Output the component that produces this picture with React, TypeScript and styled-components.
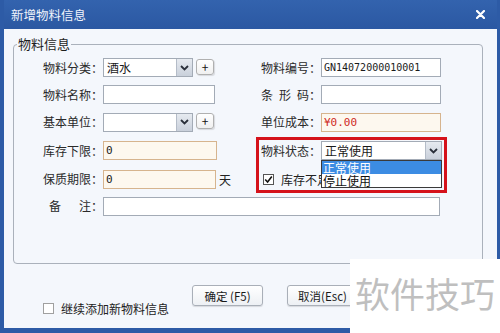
import React from "react";
import styled, { createGlobalStyle } from "styled-components";

const Global = createGlobalStyle`
  html, body { margin: 0; padding: 0; }
  body {
    width: 500px; height: 333px; overflow: hidden;
    font-family: "Noto Sans CJK SC", "Noto Sans", sans-serif;
  }
`;

const Window = styled.div`
  position: relative;
  width: 500px;
  height: 333px;
  box-sizing: border-box;
  background: #2d5ba6;
  padding: 0 3px 5px 4px;
  display: flex;
  flex-direction: column;
`;

const TitleBar = styled.div`
  height: 29px;
  flex-shrink: 0;
  display: flex;
  align-items: center;
  justify-content: space-between;
  padding: 0 12px 0 7px;
  color: #eef3fb;
  font-size: 12.5px;
  background: linear-gradient(#3363ae, #2b58a2);
`;

const Body = styled.div`
  flex: 1;
  background: #f4f7fc;
  padding: 8px 14px 0 9px;
  display: flex;
  flex-direction: column;
`;

const Group = styled.fieldset`
  margin: 0;
  padding: 3px 0 0 0;
  height: 227px;
  box-sizing: border-box;
  border: 1px solid #aab1bb;
  border-radius: 4px;
  min-inline-size: 0;
`;

const Legend = styled.legend`
  margin-left: 3px;
  padding: 0 1px;
  font-size: 13px;
  line-height: 14px;
  color: #1e1e1e;
`;

const FormGrid = styled.div`
  position: relative;
  display: grid;
  grid-template-columns: 89px 114px 44px 60px 122px;
  grid-template-rows: 27px 27px 28px 29px 28px 26px;
  align-items: center;
`;

const Label = styled.div`
  justify-self: end;
  font-size: 12px;
  line-height: 14px;
  color: #2a2a2a;
  white-space: nowrap;
`;

const Cell = styled.div<{ $span?: string }>`
  position: relative;
  display: flex;
  align-items: center;
  gap: 3px;
  grid-column: ${(p) => p.$span || "auto"};
`;

const Field = styled.div<{ $w: number; $peach?: boolean }>`
  flex-shrink: 0;
  width: ${(p) => p.$w}px;
  height: 19px;
  box-sizing: border-box;
  border: 1px solid ${(p) => (p.$peach ? "#d6b48e" : "#a3abb6")};
  background: ${(p) => (p.$peach ? "#fdf8ef" : "#ffffff")};
  display: flex;
  align-items: center;
  padding-left: 2px;
  font-size: 12px;
  color: #1a1a1a;
  overflow: hidden;
  white-space: nowrap;
`;

const Mono = styled.span<{ $red?: boolean; $size?: number }>`
  font-family: "DejaVu Sans Mono", "Liberation Mono", monospace;
  font-size: ${(p) => p.$size || 10}px;
  color: ${(p) => (p.$red ? "#cf2a24" : "#1a1a1a")};
`;

const SelectBox = styled.div<{ $w: number }>`
  position: relative;
  flex-shrink: 0;
  width: ${(p) => p.$w}px;
  height: 19px;
  box-sizing: border-box;
  border: 1px solid #a3abb6;
  background: #fff;
  display: flex;
  align-items: center;
`;

const SelectText = styled.span`
  flex: 1;
  padding-left: 3px;
  font-size: 12px;
  line-height: 14px;
  color: #1a1a1a;
  white-space: nowrap;
`;

const ArrowBtn = styled.div`
  width: 16px;
  height: 17px;
  box-sizing: border-box;
  border-left: 1px solid #b4bcc8;
  background: linear-gradient(#e6eaf0, #c9d0db);
  display: flex;
  align-items: center;
  justify-content: center;
`;

const PlusBtn = styled.div`
  width: 18px;
  height: 16px;
  box-sizing: border-box;
  margin-top: -2px;
  border: 1px solid #b0b0b0;
  border-radius: 3px;
  background: linear-gradient(#ffffff, #f0f0f0);
  box-shadow: 1px 1px 1px rgba(0, 0, 0, 0.12);
  display: flex;
  align-items: center;
  justify-content: center;
  font-size: 12px;
  line-height: 12px;
  color: #111;
`;

const Unit = styled.span`
  font-size: 12px;
  color: #222;
`;

const DropList = styled.div`
  position: absolute;
  top: 18px;
  left: -1px;
  width: 121px;
  box-sizing: border-box;
  border: 1px solid #3a3a3a;
  background: #fff;
  z-index: 3;
`;

const DropItem = styled.div<{ $active?: boolean }>`
  height: 13px;
  line-height: 13px;
  font-size: 12px;
  padding-left: 1px;
  background: ${(p) => (p.$active ? "#3c8ce3" : "#fff")};
  color: ${(p) => (p.$active ? "#ffffff" : "#111")};
  white-space: nowrap;
`;

const CheckRow = styled.div<{ $w?: number; $indent?: number }>`
  display: flex;
  align-items: center;
  gap: 7px;
  flex-shrink: 0;
  margin-left: ${(p) => p.$indent || 0}px;
  width: ${(p) => (p.$w ? `${p.$w}px` : "auto")};
  font-size: 12px;
  line-height: 13px;
  color: #222;
  white-space: nowrap;
`;

const ClippedText = styled.span<{ $max: number }>`
  display: inline-block;
  max-width: ${(p) => p.$max}px;
  overflow: hidden;
  white-space: nowrap;
`;

const Box = styled.div<{ $checked?: boolean }>`
  width: 11px;
  height: 11px;
  box-sizing: border-box;
  border: 1px solid ${(p) => (p.$checked ? "#555" : "#a0a0a0")};
  background: #fff;
  display: flex;
  align-items: center;
  justify-content: center;
  flex-shrink: 0;
`;

const Highlight = styled.div`
  position: absolute;
  left: 242px;
  top: 83px;
  width: 191px;
  height: 56px;
  box-sizing: border-box;
  border: 3px solid #d5121b;
  pointer-events: none;
  z-index: 4;
`;

const Footer = styled.div`
  display: flex;
  align-items: flex-start;
  padding: 21px 0 0 30px;
`;

const FooterCheck = styled(CheckRow)`
  margin-top: 17px;
`;

const Buttons = styled.div`
  display: flex;
  gap: 24px;
`;

const Button = styled.div`
  width: 71px;
  height: 21px;
  box-sizing: border-box;
  border: 1px solid #a9afb8;
  border-radius: 3px;
  background: linear-gradient(#ffffff, #edf0f4);
  box-shadow: 0 1px 1px rgba(0, 0, 0, 0.12);
  display: flex;
  align-items: center;
  justify-content: center;
  font-size: 11.5px;
  color: #1a1a1a;
  white-space: nowrap;
`;

const Watermark = styled.div`
  position: absolute;
  right: 0;
  bottom: 0;
  width: 150px;
  height: 74px;
  background: #ffffff;
  padding: 15px 0 0 5px;
  box-sizing: border-box;
  font-size: 35px;
  line-height: 38px;
  color: #bfbfbf;
  white-space: nowrap;
  overflow: hidden;
`;

const Chevron = () => (
  <svg width="9" height="6" viewBox="0 0 9 6">
    <path d="M1 1 L4.5 4.5 L8 1" fill="none" stroke="#2a2f3a" strokeWidth="1.8" />
  </svg>
);

const Check = () => (
  <svg width="9" height="9" viewBox="0 0 9 9">
    <path d="M1.2 4.5 L3.6 7 L7.8 1.6" fill="none" stroke="#111" strokeWidth="1.6" />
  </svg>
);

const Close = () => (
  <svg width="9" height="9" viewBox="0 0 9 9">
    <path d="M1 1 L8 8 M8 1 L1 8" stroke="#ffffff" strokeWidth="2.2" strokeLinecap="round" />
  </svg>
);

const Select = ({ w, value, children }: { w: number; value?: string; children?: React.ReactNode }) => (
  <SelectBox $w={w}>
    <SelectText>{value}</SelectText>
    <ArrowBtn>
      <Chevron />
    </ArrowBtn>
    {children}
  </SelectBox>
);

export default function App() {
  return (
    <>
      <Global />
      <Window>
        <TitleBar>
          <span>新增物料信息</span>
          <Close />
        </TitleBar>
        <Body>
          <Group>
            <Legend>物料信息</Legend>
            <FormGrid>
              <Label>物料分类：</Label>
              <Cell>
                <Select w={90} value="酒水" />
                <PlusBtn>+</PlusBtn>
              </Cell>
              <div />
              <Label>物料编号：</Label>
              <Cell>
                <Field $w={120}>
                  <Mono>GN14072000010001</Mono>
                </Field>
              </Cell>

              <Label>物料名称：</Label>
              <Cell>
                <Field $w={112} />
              </Cell>
              <div />
              <Label>条{"\u2002"}形{"\u2002"}码：</Label>
              <Cell>
                <Field $w={120} />
              </Cell>

              <Label>基本单位：</Label>
              <Cell>
                <Select w={90} value="" />
                <PlusBtn>+</PlusBtn>
              </Cell>
              <div />
              <Label>单位成本：</Label>
              <Cell>
                <Field $w={120} $peach>
                  <Mono $red $size={11}>¥0.00</Mono>
                </Field>
              </Cell>

              <Label>库存下限：</Label>
              <Cell>
                <Field $w={114} $peach>
                  <Mono $size={11}>0</Mono>
                </Field>
              </Cell>
              <div />
              <Label>物料状态：</Label>
              <Cell>
                <Select w={121} value="正常使用">
                  <DropList>
                    <DropItem $active>正常使用</DropItem>
                    <DropItem>停止使用</DropItem>
                  </DropList>
                </Select>
              </Cell>

              <Label>保质期限：</Label>
              <Cell>
                <Field $w={113} $peach>
                  <Mono $size={11}>0</Mono>
                </Field>
                <Unit>天</Unit>
              </Cell>
              <div />
              <Cell $span="4 / 6">
                <CheckRow $indent={2}>
                  <Box $checked>
                    <Check />
                  </Box>
                  <ClippedText $max={40}>库存不足提醒</ClippedText>
                </CheckRow>
              </Cell>

              <Label>备{"\u3000\u2002"}注：</Label>
              <Cell $span="2 / 6">
                <Field $w={337} />
              </Cell>

              <Highlight />
            </FormGrid>
          </Group>
          <Footer>
            <FooterCheck $w={149}>
              <Box />
              继续添加新物料信息
            </FooterCheck>
            <Buttons>
              <Button>确定 (F5)</Button>
              <Button>取消(Esc)</Button>
            </Buttons>
          </Footer>
        </Body>
        <Watermark>软件技巧</Watermark>
      </Window>
    </>
  );
}
